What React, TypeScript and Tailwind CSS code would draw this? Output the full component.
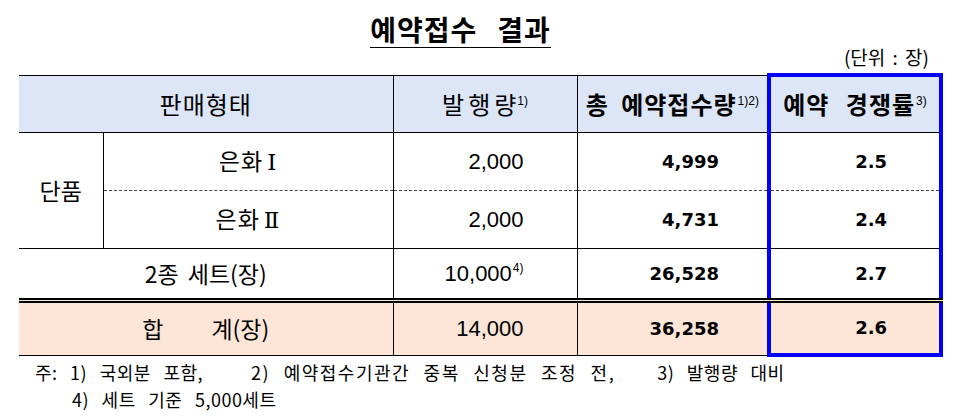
const kr = "font-['Noto_Sans_CJK_KR',sans-serif]";
const num = "font-['Liberation_Sans','Noto_Sans_CJK_KR',sans-serif]";
const numB = "font-['DejaVu_Sans','Noto_Sans_CJK_KR',sans-serif] font-bold";
const roman = "font-['DejaVu_Serif','Liberation_Serif',serif] ml-[4px]";

function Sup({ children }: { children: React.ReactNode }) {
  return (
    <sup className={`${num} relative -top-[0.75em] ml-[1px] text-[12px] font-normal tracking-normal`}>
      {children}
    </sup>
  );
}

function Gap({ w }: { w: string }) {
  return <span className={`inline-block ${w}`} />;
}

export default function App() {
  return (
    <div className={`w-[953px] h-[420px] bg-white text-black ${kr}`}>
      {/* title */}
      <div className="flex h-[48px] items-end justify-center pr-[32px]">
        <span className="inline-block border-b border-black text-[28px] font-bold leading-[36px] tracking-[1px]">
          예약접수<Gap w="w-[20px]" />결과
        </span>
      </div>
      <div className="flex h-[25px] items-center justify-end pb-[6px] pr-[24px] text-[19px] [word-spacing:3px]">
        (단위 : 장)
      </div>

      {/* result table */}
      <table className="ml-[19px] w-[922px] table-fixed border-collapse">
        <colgroup>
          <col className="w-[84px]" />
          <col className="w-[290px]" />
          <col className="w-[184px]" />
          <col className="w-[192px]" />
          <col className="w-[172px]" />
        </colgroup>
        <thead>
          <tr className="h-[57px] bg-[#dde6f6]">
            <th colSpan={2} className="border-y border-black text-[24px] font-normal tracking-[1px]">
              판매형태
            </th>
            <th className="border border-black text-[24px] font-normal">
              <span className="tracking-[4px]">발행</span>량<Sup>1)</Sup>
            </th>
            <th className="border border-black text-[24px] font-bold tracking-[1px] [word-spacing:6px]">
              총 예약접수량<Sup>1)2)</Sup>
            </th>
            <th className="border-x-4 border-t-4 border-b border-x-[#0000ff] border-t-[#0000ff] border-b-black text-[24px] font-bold tracking-[1px] [word-spacing:10px]">
              예약 경쟁률<Sup>3)</Sup>
            </th>
          </tr>
        </thead>
        <tbody>
          <tr className="h-[58px]">
            <td rowSpan={2} className="border-r border-b border-black text-center text-[23px]">
              단품
            </td>
            <td className="border-b border-b-[#444] [border-bottom-style:dashed] text-center text-[23px] tracking-[1px]">
              은화<span className={roman}>Ⅰ</span>
            </td>
            <td className={`border-x border-x-black border-b border-b-[#444] [border-bottom-style:dashed] pr-[53px] text-right text-[22px] ${num}`}>
              2,000
            </td>
            <td className={`border-x border-x-black border-b border-b-[#444] [border-bottom-style:dashed] pr-[48px] text-right text-[18px] ${numB}`}>
              4,999
            </td>
            <td className={`border-x-4 border-x-[#0000ff] border-b border-b-[#444] [border-bottom-style:dashed] pr-[52px] text-right text-[18px] ${numB}`}>
              2.5
            </td>
          </tr>
          <tr className="h-[58px]">
            <td className="border-b border-black text-center text-[23px] tracking-[1px]">
              은화<span className={roman}>Ⅱ</span>
            </td>
            <td className={`border-x border-b border-black pr-[53px] text-right text-[22px] ${num}`}>
              2,000
            </td>
            <td className={`border-x border-b border-black pr-[48px] text-right text-[18px] ${numB}`}>
              4,731
            </td>
            <td className={`border-x-4 border-x-[#0000ff] border-b border-b-black pr-[52px] text-right text-[18px] ${numB}`}>
              2.4
            </td>
          </tr>
          <tr className="h-[52px]">
            <td colSpan={2} className="text-center text-[23px] [word-spacing:4px]">
              2종 세트(장)
            </td>
            <td className={`border-x border-black pr-[53px] text-right text-[22px] ${num}`}>
              10,000<Sup>4)</Sup>
            </td>
            <td className={`border-x border-black pr-[48px] text-right text-[18px] ${numB}`}>
              26,528
            </td>
            <td className={`border-x-4 border-x-[#0000ff] pr-[52px] text-right text-[18px] ${numB}`}>
              2.7
            </td>
          </tr>
          <tr className="h-[55px] bg-[#fde6d8]">
            <td colSpan={2} className="border-t-[5px] border-b border-black [border-top-style:double] text-center text-[23px]">
              합<Gap w="w-[48px]" />계(장)
            </td>
            <td className={`border-x border-x-black border-t-[5px] border-t-black [border-top-style:double] border-b border-b-black pr-[53px] text-right text-[22px] ${num}`}>
              14,000
            </td>
            <td className={`border-x border-x-black border-t-[5px] border-t-black [border-top-style:double] border-b border-b-black pr-[48px] text-right text-[18px] ${numB}`}>
              36,258
            </td>
            <td className={`border-x-4 border-b-4 border-x-[#0000ff] border-b-[#0000ff] border-t-[5px] border-t-black [border-top-style:double] pr-[52px] text-right text-[18px] ${numB}`}>
              2.6
            </td>
          </tr>
        </tbody>
      </table>

      {/* notes */}
      <div className="pt-[2px] text-[18px] leading-[27px] tracking-[0.5px] [word-spacing:8px]">
        <div className="pl-[35px]">
          주: 1) 국외분 포함,<Gap w="w-[48px]" />
          <span className="tracking-[1.5px]">2) 예약접수기관간 중복 신청분 조정 전,</span>
          <Gap w="w-[42px]" />3) 발행량 대비
        </div>
        <div className="pl-[72px]">4) 세트 기준 5,000세트</div>
      </div>
    </div>
  );
}
